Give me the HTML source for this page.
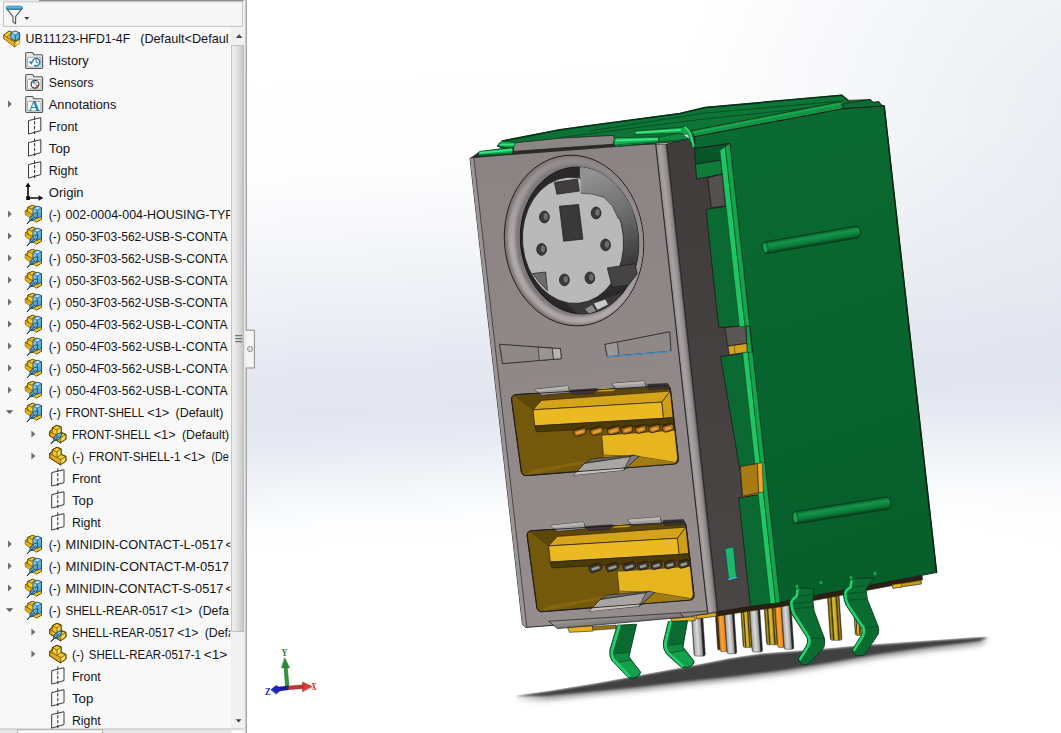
<!DOCTYPE html>
<html lang="en"><head><meta charset="utf-8"><title>UB11123-HFD1-4F</title>
<style>
html,body{margin:0;padding:0;background:#fff;}
body{width:1061px;height:733px;overflow:hidden;}
svg{display:block;}
text{font-family:"Liberation Sans",Arial,sans-serif;font-size:13.4px;fill:#141414;}
</style></head><body>
<svg width="1061" height="733" viewBox="0 0 1061 733">
<defs>

<linearGradient id="bg1" gradientUnits="userSpaceOnUse" x1="640" y1="0" x2="680" y2="733">
<stop offset="0" stop-color="#ffffff"/><stop offset="0.20" stop-color="#fefefe"/><stop offset="0.30" stop-color="#f6f7fa"/><stop offset="0.40" stop-color="#eceff5"/><stop offset="0.48" stop-color="#e5e8f1"/><stop offset="0.54" stop-color="#e2e6ef"/><stop offset="0.59" stop-color="#e8ebf3"/><stop offset="0.64" stop-color="#f3f5f9"/><stop offset="0.69" stop-color="#fcfdfe"/><stop offset="0.73" stop-color="#ffffff"/><stop offset="1" stop-color="#ffffff"/></linearGradient>
<radialGradient id="bg2" gradientUnits="userSpaceOnUse" cx="1110" cy="130" r="430"><stop offset="0" stop-color="#dfe3ec" stop-opacity="0.7"/><stop offset="1" stop-color="#dfe3ec" stop-opacity="0"/></radialGradient>


<clipPath id="treeclip"><rect x="0" y="27" width="230.3" height="702"/></clipPath>
<linearGradient id="thumbg" x1="0" x2="1" y1="0" y2="0"><stop offset="0" stop-color="#f3f3f3"/><stop offset="0.45" stop-color="#e2e2e2"/><stop offset="1" stop-color="#c4c4c4"/></linearGradient>
<linearGradient id="funnelg" x1="0" x2="0" y1="0" y2="1"><stop offset="0" stop-color="#7fd0ea"/><stop offset="1" stop-color="#2a8fb5"/></linearGradient>
<linearGradient id="cubeb" x1="0" x2="1" y1="0" y2="1"><stop offset="0" stop-color="#9fd8f2"/><stop offset="1" stop-color="#3d9ccc"/></linearGradient>
<g id="i-plane"><path d="M0.5,-5.4 L12.8,-8.3 L12.8,4.6 L0.5,8.1 Z" fill="#fbfbfb" stroke="#3a3a3a" stroke-width="1"/><path d="M6.6,-9.6 L6.6,9" stroke="#2a2a2a" stroke-width="1" stroke-dasharray="3.2,1.6" fill="none"/></g>
<g id="i-origin"><path d="M3,-6.5 L3,6 L16,6" fill="none" stroke="#111" stroke-width="1.7"/><path d="M3,-9.6 L5.7,-5 L0.3,-5 Z M18.3,6 L13.6,3.3 L13.6,8.7 Z" fill="#111"/><rect x="1.2" y="4.2" width="3.8" height="3.8" fill="#111"/></g>
<g id="i-folder"><path d="M0.7,7.6 L0.7,-6.4 Q0.7,-7.5 1.8,-7.5 L7,-7.5 Q7.8,-7.5 8.2,-6.6 L8.8,-5.2 L16.6,-5.2 Q17.6,-5.2 17.6,-4.2 L17.6,7.6 Q17.6,8.5 16.6,8.5 L1.7,8.5 Q0.7,8.5 0.7,7.6 Z" fill="#e9e9e9" stroke="#555" stroke-width="1.1"/><rect x="2.5" y="-2.6" width="13.4" height="9.6" rx="0.8" fill="#f6fafc" stroke="#8d8d8d" stroke-width="0.7"/></g>
<g id="i-hist"><use href="#i-folder"/><path d="M7.6,1.2 A3.7,3.7 0 1 1 9,5.2" fill="#fff" stroke="#2b7fae" stroke-width="1.5"/><path d="M11.2,-0.4 L11.2,2.4 L13.4,3" stroke="#1d5e86" stroke-width="0.9" fill="none"/><path d="M3.6,1.4 L8.6,1.2 L6.4,4.8 Z" fill="#2b7fae"/></g>
<g id="i-sens"><use href="#i-folder"/><circle cx="10" cy="2.2" r="3.9" fill="#f4f4f4" stroke="#3c3c3c" stroke-width="1.2"/><path d="M7.4,-0.4 L9.6,1.8 M9.4,-0.8 L9.8,0.6" stroke="#2b7fae" stroke-width="1.1"/><path d="M10,2.2 L13.4,3.4 L11.8,5.6 Z" fill="#d8451f"/><path d="M10,2.2 L12.6,-0.2" stroke="#c8c8c8" stroke-width="1.2"/></g>
<g id="i-anno"><use href="#i-folder"/><text x="9.2" y="6.9" text-anchor="middle" textLength="11" lengthAdjust="spacingAndGlyphs" style="font-family:'Liberation Serif',serif;font-weight:bold;font-size:13.6px;fill:#2a86a8">A</text></g>
<g id="i-asm"><path d="M0.4,-2.8 L6.2,-7.1 L9.3,-5.6 L16.6,-5 L16.6,5.2 L11.7,8.9 L0.4,0.3 Z" fill="#f6ca26" stroke="#5a4508" stroke-width="1" stroke-linejoin="round"/><path d="M0.4,-2.8 L3.8,-0.9 L8.7,2.1 L11.9,4 L11.7,8.9 L0.4,0.3 Z" fill="#e3ac16"/><path d="M11.9,4 L16.6,1.4 L16.6,5.2 L11.7,8.9 Z" fill="#f9dc5c"/><path d="M0.4,-2.8 L3.8,-0.9 L8.7,2.1 L11.9,4 L16.6,1.4 M11.9,4 L11.7,8.9 M3.8,-0.9 L7.8,-3.6" stroke="#6b5208" stroke-width="0.8" fill="none"/><path d="M7.8,-5 L12,-7 L16.6,-5 L16.6,0.8 L12.4,2.9 L7.8,0.6 Z" fill="url(#cubeb)" stroke="#174f78" stroke-width="0.9" stroke-linejoin="round"/><path d="M7.8,-5 L12.4,-3 L16.6,-5 L12,-7 Z" fill="#b7e4f6" stroke="#174f78" stroke-width="0.7" stroke-linejoin="round"/><path d="M12.4,-3 L12.4,2.9" stroke="#174f78" stroke-width="0.8"/></g>
<g id="i-part"><path d="M1.4,-2.5 L4,-4.4 L4,-6.3 L8.5,-8.7 L12.8,-7.1 L12.8,-1.6 L17.6,0.4 L17.6,5.1 L12.1,8.8 L1.4,1.8 Z" fill="#f6ca26" stroke="#5a4508" stroke-width="1" stroke-linejoin="round"/><path d="M1.4,-2.5 L8.8,1.5 L12.6,3.6 L12.1,8.8 L1.4,1.8 Z" fill="#e3ac16"/><path d="M8.8,-3.9 L12.8,-7.1 L12.8,-1.6 L8.8,1.5 Z M12.6,3.6 L17.6,0.4 L17.6,5.1 L12.1,8.8 Z" fill="#f9dc5c"/><path d="M4,-6.3 L8.8,-3.9 L12.8,-7.1 M8.8,-3.9 L8.8,1.5 L12.8,-1.6 M8.8,1.5 L12.6,3.6 L17.6,0.4 M12.6,3.6 L12.1,8.8 M1.4,-2.5 L8.8,1.5 M4,-4.4 L4,-1.2" fill="none" stroke="#6b5208" stroke-width="0.8" stroke-linejoin="round"/><path d="M1.4,-2.5 L4,-4.4 L4,-6.3 L8.5,-8.7 L12.8,-7.1 L12.8,-1.6 L17.6,0.4 L17.6,5.1 L12.1,8.8 L1.4,1.8 Z" fill="none" stroke="#5a4508" stroke-width="1" stroke-linejoin="round"/></g>
<g id="i-feather"><path d="M2.3,9.7 L5,6.4 C4.6,2.6 8.6,-0.8 13,-1.2 C13,3.4 9.6,6.8 5.6,6.6 Z" fill="#86cff0" stroke="#123f5c" stroke-width="1" stroke-linejoin="round"/><path d="M2.2,9.9 L11.4,0.6 M6.2,5.6 L9.6,5 M7.8,4 L11.2,3 M6,5 L6.4,2.4 M7.8,3.4 L8.6,0.8" stroke="#123f5c" stroke-width="0.7" fill="none"/></g>
<g id="i-partf"><use href="#i-part"/><use href="#i-feather" x="0.4" y="0"/></g>
<g id="i-comp"><path d="M0.6,-3.4 L3,-4.8 L3,-6.7 L7.8,-8.7 L12.1,-7.2 L16.8,-6 L16.8,5.2 L11.6,8.2 L0.6,0.4 Z" fill="#f6ca26" stroke="#5a4508" stroke-width="1" stroke-linejoin="round"/><path d="M0.6,-3.4 L8,0.6 L11.8,3 L11.6,8.2 L0.6,0.4 Z" fill="#e3ac16"/><path d="M3,-6.7 L7.6,-4.6 M0.6,-3.4 L8,0.6 M3,-4.8 L3,-2" stroke="#6b5208" stroke-width="0.8" fill="none"/><path d="M8.25,-5.8 L13,-7.7 L16.8,-6.1 L16.8,2.3 L12.5,4.4 L8.25,2.2 Z" fill="url(#cubeb)" stroke="#174f78" stroke-width="0.9" stroke-linejoin="round"/><path d="M8.25,-5.8 L12.5,-3.9 L16.8,-6.1 L13,-7.7 Z" fill="#b7e4f6" stroke="#174f78" stroke-width="0.7" stroke-linejoin="round"/><path d="M12.5,-3.9 L12.5,4.4" stroke="#174f78" stroke-width="0.8"/><use href="#i-feather" x="0.2" y="0"/></g>
<path id="i-arr-r" d="M0,-3.5 L3.9,0 L0,3.5 Z" fill="#6e6e6e"/>
<path id="i-arr-d" d="M0,-1.8 L7.4,-1.8 L3.7,2 Z" fill="#5e5e5e"/>


<linearGradient id="gFront" gradientUnits="userSpaceOnUse" x1="560" y1="150" x2="620" y2="620"><stop offset="0" stop-color="#8c8484"/><stop offset="0.55" stop-color="#918989"/><stop offset="1" stop-color="#968e8e"/></linearGradient>
<linearGradient id="gBend" gradientUnits="userSpaceOnUse" x1="680" y1="380" x2="692" y2="378.7"><stop offset="0" stop-color="#8d8686"/><stop offset="0.45" stop-color="#a8a2a2"/><stop offset="0.8" stop-color="#8f8989"/><stop offset="1" stop-color="#5a5555"/></linearGradient>
<linearGradient id="gSide" gradientUnits="userSpaceOnUse" x1="690" y1="140" x2="730" y2="610"><stop offset="0" stop-color="#413c3c"/><stop offset="1" stop-color="#4b4646"/></linearGradient>
<linearGradient id="gGreen" gradientUnits="userSpaceOnUse" x1="740" y1="120" x2="900" y2="600"><stop offset="0" stop-color="#0a6a31"/><stop offset="0.5" stop-color="#08642e"/><stop offset="1" stop-color="#075e2b"/></linearGradient>
<linearGradient id="gTop" gradientUnits="userSpaceOnUse" x1="600" y1="110" x2="615" y2="150"><stop offset="0" stop-color="#0c7035"/><stop offset="1" stop-color="#0d7637"/></linearGradient>
<linearGradient id="gRing" gradientUnits="userSpaceOnUse" x1="520" y1="180" x2="640" y2="310"><stop offset="0" stop-color="#6a6464"/><stop offset="0.35" stop-color="#8c8585"/><stop offset="0.7" stop-color="#aaa3a3"/><stop offset="1" stop-color="#8a8383"/></linearGradient>
<linearGradient id="gBarrel" gradientUnits="userSpaceOnUse" x1="596" y1="172" x2="634" y2="286"><stop offset="0" stop-color="#929292"/><stop offset="0.4" stop-color="#6c6c6c"/><stop offset="0.78" stop-color="#3e3e3e"/><stop offset="1" stop-color="#2a2a2a"/></linearGradient>
<linearGradient id="gRod" gradientUnits="userSpaceOnUse" x1="0" y1="-6" x2="0" y2="6"><stop offset="0" stop-color="#0a5a29"/><stop offset="0.3" stop-color="#14964a"/><stop offset="0.7" stop-color="#0c7a39"/><stop offset="1" stop-color="#053d1b"/></linearGradient>
<linearGradient id="gPinG" x1="0" x2="1" y1="0" y2="0"><stop offset="0" stop-color="#5a5a5a"/><stop offset="0.14" stop-color="#b5b5b5"/><stop offset="0.42" stop-color="#dadada"/><stop offset="0.74" stop-color="#9a9a9a"/><stop offset="0.84" stop-color="#262626"/><stop offset="1" stop-color="#1c1c1c"/></linearGradient>
<linearGradient id="gPinD" x1="0" x2="1" y1="0" y2="0"><stop offset="0" stop-color="#3a2a08"/><stop offset="1" stop-color="#5a3a08"/></linearGradient>
<linearGradient id="gPinYs" x1="0" x2="1" y1="0" y2="0"><stop offset="0" stop-color="#3a2e06"/><stop offset="0.16" stop-color="#b89a20"/><stop offset="0.3" stop-color="#3a2e06"/><stop offset="0.42" stop-color="#d8bc34"/><stop offset="0.62" stop-color="#c8a828"/><stop offset="0.74" stop-color="#3a2e06"/><stop offset="0.86" stop-color="#a88a1c"/><stop offset="1" stop-color="#2a2206"/></linearGradient>
<linearGradient id="gPinY" x1="0" x2="1" y1="0" y2="0"><stop offset="0" stop-color="#7a6410"/><stop offset="0.4" stop-color="#e2c23a"/><stop offset="1" stop-color="#7a6410"/></linearGradient>
<linearGradient id="gPinO" x1="0" x2="1" y1="0" y2="0"><stop offset="0" stop-color="#c8741a"/><stop offset="0.35" stop-color="#ffa233"/><stop offset="0.8" stop-color="#e88a20"/><stop offset="1" stop-color="#6a3a08"/></linearGradient>
<linearGradient id="gShadow" gradientUnits="userSpaceOnUse" x1="740" y1="655" x2="748" y2="692"><stop offset="0" stop-color="#2e2e2e" stop-opacity="0.95"/><stop offset="0.45" stop-color="#555" stop-opacity="0.7"/><stop offset="1" stop-color="#bbb" stop-opacity="0"/></linearGradient>
<linearGradient id="gShadowH" gradientUnits="userSpaceOnUse" x1="520" y1="0" x2="985" y2="0"><stop offset="0" stop-color="#fff" stop-opacity="1"/><stop offset="0.22" stop-color="#fff" stop-opacity="0"/><stop offset="0.75" stop-color="#fff" stop-opacity="0"/><stop offset="1" stop-color="#fff" stop-opacity="1"/></linearGradient>
<filter id="blur1s" x="-5%" y="-30%" width="110%" height="160%"><feGaussianBlur stdDeviation="1.1"/></filter>
<filter id="blur2" x="-5%" y="-40%" width="110%" height="180%"><feGaussianBlur stdDeviation="3"/></filter>
<linearGradient id="gLeg" x1="0" x2="1" y1="0" y2="0"><stop offset="0" stop-color="#19b85c"/><stop offset="0.25" stop-color="#0f8a40"/><stop offset="1" stop-color="#0a6e33"/></linearGradient>
<clipPath id="cpRing"><ellipse cx="574" cy="240.5" rx="69" ry="85" transform="rotate(-6 574 240.5)"/></clipPath>
<linearGradient id="gRingHL" gradientUnits="userSpaceOnUse" x1="640" y1="170" x2="520" y2="310"><stop offset="0" stop-color="#8a8383"/><stop offset="0.4" stop-color="#9a9393"/><stop offset="0.75" stop-color="#b1aaaa"/><stop offset="1" stop-color="#a9a2a2"/></linearGradient>
<linearGradient id="gLip" gradientUnits="userSpaceOnUse" x1="615" y1="616" x2="616" y2="626"><stop offset="0" stop-color="#9a9595"/><stop offset="0.5" stop-color="#868181"/><stop offset="1" stop-color="#5e5a5a"/></linearGradient>
<filter id="blur1" x="-10%" y="-10%" width="120%" height="120%"><feGaussianBlur stdDeviation="1.3"/></filter>
<clipPath id="cpHole"><ellipse cx="579.5" cy="240.5" rx="59" ry="73.5" transform="rotate(-6 579.5 240.5)"/></clipPath>

</defs>
<rect x="247" y="0" width="814" height="733" fill="url(#bg1)"/>
<rect x="247" y="0" width="814" height="733" fill="url(#bg2)"/>
<clipPath id="cpShadow"><polygon points="514.7,695.5 549.0,690.8 598.0,682.7 637.3,675.4 671.6,669.2 700.0,664.0 730.0,658.0 760.0,653.5 790.0,651.2 836.0,647.5 860.0,645.1 897.0,642.6 946.0,639.2 975.0,637.1 988.0,636.4 1061.0,632.0 1061.0,733.0 500.0,733.0 500.0,700.0"/></clipPath>
<g clip-path="url(#cpShadow)"><polygon points="514.7,697.9 549.0,693.2 598.0,685.1 637.3,677.8 671.6,671.6 700.0,666.4 730.0,660.4 760.0,655.9 790.0,653.6 836.0,649.9 860.0,647.5 897.0,645.0 946.0,641.6 975.0,639.5 988.0,638.8 980.0,643.9 971.0,645.1 924.0,650.5 877.0,656.9 829.9,665.1 782.7,672.9 735.6,678.9 688.5,683.9 641.0,689.5 594.0,694.1 547.0,698.9" fill="#4a4a4a" opacity="0.75" filter="url(#blur2)"/><polygon points="514.7,696.3 549.0,691.6 598.0,683.5 637.3,676.2 671.6,670.0 700.0,664.8 730.0,658.8 760.0,654.3 790.0,652.0 836.0,648.3 860.0,645.9 897.0,643.4 946.0,640.0 975.0,637.9 988.0,637.2 980.0,641.0 971.0,642.2 924.0,647.6 877.0,654.0 829.9,662.2 782.7,670.0 735.6,676.0 688.5,681.0 641.0,686.6 594.0,691.2 547.0,696.0" fill="#404040" filter="url(#blur1s)"/></g>
<g transform="translate(691.3,614) skewX(3.8)"><rect x="0" y="0" width="11.3" height="42.1" rx="2.0" fill="url(#gPinG)" stroke="#2a2a2a" stroke-width="0.5"/></g>
<g transform="translate(715.2,612) skewX(3.8)"><rect x="0" y="0" width="2.8" height="38.0" rx="1.4" fill="url(#gPinD)" stroke="#2a2a2a" stroke-width="0.5"/></g>
<g transform="translate(717.5,612) skewX(3.8)"><rect x="0" y="0" width="7.2" height="39.6" rx="2.0" fill="url(#gPinO)" stroke="#2a2a2a" stroke-width="0.5"/></g>
<g transform="translate(724.1,610) skewX(3.8)"><rect x="0" y="0" width="9.8" height="43.8" rx="2.0" fill="url(#gPinG)" stroke="#2a2a2a" stroke-width="0.5"/></g>
<g transform="translate(740.5,606) skewX(3.8)"><rect x="0" y="0" width="9.1" height="41.6" rx="2.0" fill="url(#gPinYs)" stroke="#2a2a2a" stroke-width="0.5"/></g>
<g transform="translate(749,604) skewX(3.8)"><rect x="0" y="0" width="10.4" height="48.1" rx="2.0" fill="url(#gPinG)" stroke="#2a2a2a" stroke-width="0.5"/></g>
<g transform="translate(763.7,601) skewX(3.8)"><rect x="0" y="0" width="11.3" height="43.8" rx="2.0" fill="url(#gPinYs)" stroke="#2a2a2a" stroke-width="0.5"/></g>
<g transform="translate(774.5,600) skewX(3.8)"><rect x="0" y="0" width="6.7" height="47.6" rx="2.0" fill="url(#gPinO)" stroke="#2a2a2a" stroke-width="0.5"/></g>
<g transform="translate(780.7,598) skewX(3.8)"><rect x="0" y="0" width="9.8" height="51.3" rx="2.0" fill="url(#gPinG)" stroke="#2a2a2a" stroke-width="0.5"/></g>
<g transform="translate(827,590) skewX(3.8)"><rect x="0" y="0" width="11.7" height="50.3" rx="2.0" fill="url(#gPinYs)" stroke="#2a2a2a" stroke-width="0.5"/></g>
<g transform="translate(853,600) skewX(3.8)"><rect x="0" y="0" width="6.0" height="35.5" rx="2.0" fill="url(#gPinYs)" stroke="#2a2a2a" stroke-width="0.5"/></g>
<polygon points="567.4,627.2 592.4,625.8 592.9,631.1 569.4,632.3" fill="#e4b21d" stroke="#1d1a1a" stroke-width="0.6" stroke-linejoin="round"/>
<polygon points="592.9,626.4 616.0,625.0 616.0,628.6 593.2,630.2" fill="#94720f" stroke="#1d1a1a" stroke-width="0.5" stroke-linejoin="round"/>
<polygon points="671.0,618.4 694.8,616.6 695.2,620.6 671.4,622.6" fill="#e4b21d" stroke="#1d1a1a" stroke-width="0.6" stroke-linejoin="round"/>
<polygon points="696.0,615.4 716.0,612.4 716.4,616.2 696.4,619.0" fill="#d9a81c" stroke="#1d1a1a" stroke-width="0.6" stroke-linejoin="round"/>
<polygon points="497.0,146.0 499.0,144.3 502.3,141.0 560.0,129.7 585.0,126.2 680.0,113.4 705.0,107.5 841.7,95.2 848.0,100.4 870.2,99.6 873.0,102.3 879.1,101.8 881.1,105.0 884.2,106.0 843.8,108.7 694.5,136.7 690.0,141.0 614.8,146.0 513.7,152.0" fill="url(#gTop)" stroke="#1d1a1a" stroke-width="0.8" stroke-linejoin="round"/>
<path d="M590,131 L705,113 L843,101 M560,137.5 L700,119.5 L842.5,104.5 M705,107.5 L760,103.5" fill="none" stroke="#053d1b" stroke-width="0.7" stroke-linejoin="round" stroke-linecap="round"/>
<path d="M502.3,141 L560,129.7 L585,126.2 L680,113.4 L705,107.5 L841.7,95.2 L848,100.4" fill="none" stroke="#04331a" stroke-width="1.5" stroke-linejoin="round" stroke-linecap="round"/>
<polygon points="692.0,130.6 839.7,101.8 843.8,108.7 694.5,136.9" fill="#119544" stroke="#1d1a1a" stroke-width="0.7" stroke-linejoin="round"/>
<path d="M693,132.6 L840.6,103.8" fill="none" stroke="#18aa50" stroke-width="1.6" stroke-linejoin="round" stroke-linecap="round"/>
<polygon points="843.8,103.5 870.2,99.6 873.0,102.3 879.1,101.8 881.1,105.0 884.2,106.0 843.8,108.7" fill="#0a6d32" stroke="#1d1a1a" stroke-width="0.7" stroke-linejoin="round"/>
<polygon points="666.5,144.0 691.5,138.5 730.0,140.0 781.0,602.5 755.0,606.0 717.6,611.6" fill="url(#gSide)" stroke="#1d1a1a" stroke-width="0.8" stroke-linejoin="round"/>
<polygon points="717.6,611.6 779.5,602.0 922.0,575.2 922.6,579.8 782.0,606.6 750.0,611.0 718.0,616.0" fill="#2c2010" stroke="#1d1a1a" stroke-width="0.6" stroke-linejoin="round"/>
<polygon points="892.3,584.8 921.0,580.3 921.4,584.0 893.0,588.2" fill="#c8981a" stroke="#1d1a1a" stroke-width="0.6" stroke-linejoin="round"/>
<polygon points="892.3,584.8 901.0,583.4 901.6,587.0 893.0,588.2" fill="#e6b41e" stroke="#1d1a1a" stroke-width="0.4" stroke-linejoin="round"/>
<polygon points="694.5,136.7 843.8,108.7 884.2,106.0 936.6,572.5 780.0,602.3 729.8,143.4 694.8,148.4" fill="url(#gGreen)" stroke="#1d1a1a" stroke-width="0.9" stroke-linejoin="round"/>
<path d="M884.2,106 L936.6,572.5" fill="none" stroke="#04240f" stroke-width="1.5" stroke-linejoin="round" stroke-linecap="round"/>
<polygon points="694.7,148.6 726.0,144.2 720.9,160.2 695.4,164.3" fill="#07562a" stroke="#1d1a1a" stroke-width="0.8" stroke-linejoin="round"/>
<polygon points="695.4,164.3 720.8,160.2 722.2,174.1 696.7,179.0" fill="#0e7d3a" stroke="#1d1a1a" stroke-width="0.8" stroke-linejoin="round"/>
<polygon points="707.7,177.8 722.2,174.1 725.4,206.0 711.4,207.6" fill="#55504f" stroke="#1d1a1a" stroke-width="0.8" stroke-linejoin="round"/>
<polygon points="706.0,209.6 727.6,206.0 740.6,326.0 718.7,327.6" fill="#0b6a32" stroke="#1d1a1a" stroke-width="0.8" stroke-linejoin="round"/>
<polygon points="724.9,327.6 745.6,325.6 746.8,343.4 727.9,346.2" fill="#5a5554" stroke="#1d1a1a" stroke-width="0.7" stroke-linejoin="round"/>
<polygon points="727.9,346.2 746.8,343.4 747.4,352.2 729.4,354.9" fill="#d2a41b" stroke="#1d1a1a" stroke-width="0.7" stroke-linejoin="round"/>
<path d="M734.4,345.2 L735,354" fill="none" stroke="#5a4508" stroke-width="0.6" stroke-linejoin="round" stroke-linecap="round"/>
<polygon points="720.6,356.6 744.4,353.0 756.8,466.0 739.6,468.4" fill="#0b6a32" stroke="#1d1a1a" stroke-width="0.8" stroke-linejoin="round"/>
<polygon points="739.9,468.2 756.6,464.6 759.8,494.2 742.4,497.4" fill="#b98a14" stroke="#1d1a1a" stroke-width="0.7" stroke-linejoin="round"/>
<polygon points="753.4,465.4 756.6,464.6 759.8,494.2 756.6,494.8" fill="#f0b92a"/>
<polygon points="738.7,498.0 760.4,494.4 770.8,603.6 750.4,606.6" fill="#0b6a32" stroke="#1d1a1a" stroke-width="0.8" stroke-linejoin="round"/>
<polygon points="719.8,150.4 725.3,146.7 745.1,326.2 739.4,327.0" fill="#20c664" stroke="#06451e" stroke-width="0.6" stroke-linejoin="round"/>
<polygon points="725.3,146.7 729.8,143.6 749.7,325.5 745.1,326.2" fill="#14a44d" stroke="#06451e" stroke-width="0.6" stroke-linejoin="round"/>
<polygon points="742.6,352.6 748.1,351.9 775.6,603.0 770.2,603.8" fill="#20c664" stroke="#06451e" stroke-width="0.6" stroke-linejoin="round"/>
<polygon points="748.1,351.9 752.6,351.4 780.0,602.3 775.6,603.0" fill="#14a44d" stroke="#06451e" stroke-width="0.6" stroke-linejoin="round"/>
<polygon points="746.6,326.6 749.2,326.2 752.0,352.0 747.4,352.6" fill="#14a44d" stroke="#06451e" stroke-width="0.5" stroke-linejoin="round"/>
<polygon points="740.3,466.6 757.5,463.5 758.7,492.8 742.6,496.2" fill="#a87c12" stroke="#1d1a1a" stroke-width="0.7" stroke-linejoin="round"/>
<polygon points="757.5,463.5 762.2,462.8 763.4,492.0 758.7,492.8" fill="#f0a82a" stroke="#1d1a1a" stroke-width="0.5" stroke-linejoin="round"/>
<polygon points="725.0,548.6 733.7,546.9 736.4,577.4 728.7,579.4" fill="#1fb868" stroke="#0a4a5a" stroke-width="0.8" stroke-linejoin="round"/>
<path d="M728.7,579.4 L736.4,577.4" fill="none" stroke="#38c8e0" stroke-width="1.2" stroke-linejoin="round" stroke-linecap="round"/>
<g transform="translate(764.6,247.9) rotate(-9.78)"><rect x="-2" y="-5.9" width="99.4" height="11.8" rx="4.4" fill="url(#gRod)" stroke="#04351a" stroke-width="0.8"/><ellipse cx="0.6" cy="0" rx="2.6" ry="5.1" fill="#18a04e" stroke="#04351a" stroke-width="0.6"/></g>
<g transform="translate(794.8,517.8) rotate(-9.09)"><rect x="-2" y="-6.2" width="99.0" height="12.4" rx="4.7" fill="url(#gRod)" stroke="#04351a" stroke-width="0.8"/><ellipse cx="0.6" cy="0" rx="2.6" ry="5.4" fill="#18a04e" stroke="#04351a" stroke-width="0.6"/></g>
<polygon points="655.6,144.4 666.5,144.0 717.6,611.6 707.6,613.6" fill="url(#gBend)" stroke="#1d1a1a" stroke-width="0.7" stroke-linejoin="round"/>
<polygon points="470.0,158.2 513.6,151.4 560.0,148.0 613.2,144.2 655.6,143.9 707.6,613.6 526.0,627.4 522.4,624.6" fill="url(#gFront)" stroke="#1d1a1a" stroke-width="0.9" stroke-linejoin="round"/>
<polygon points="470.0,158.2 473.8,157.8 526.8,627.2 526.0,627.4 522.4,624.6" fill="#9a9494"/>
<path d="M473.8,157.8 L526.8,627" fill="none" stroke="#2a2626" stroke-width="0.7" stroke-linejoin="round" stroke-linecap="round"/>
<polygon points="478.0,152.5 513.7,146.0 614.8,139.0 655.6,143.9 470.0,158.2" fill="#2e2a2a"/>
<polygon points="513.7,143.0 560.0,138.2 613.2,135.4 614.8,140.0 613.2,144.2 560.0,148.0 513.6,151.4" fill="#8d8686" stroke="#1d1a1a" stroke-width="0.7" stroke-linejoin="round"/>
<g>
<ellipse cx="574" cy="240.5" rx="69.5" ry="85.5" transform="rotate(-6 574 240.5)" fill="#7f7878" stroke="#1d1a1a" stroke-width="0.9"/>
<g clip-path="url(#cpRing)"><ellipse cx="576.4" cy="240.5" rx="64.6" ry="80" transform="rotate(-6 576.4 240.5)" fill="none" stroke="url(#gRingHL)" stroke-width="7" filter="url(#blur1)"/></g>
<ellipse cx="579.5" cy="240.5" rx="59" ry="73.5" transform="rotate(-6 579.5 240.5)" fill="#2a2828" stroke="#141212" stroke-width="0.9"/>
<g clip-path="url(#cpHole)">
<polygon points="579.6,160.0 655.0,160.0 655.0,272.0 632.0,292.0 600.0,292.0 579.6,215.0" fill="url(#gBarrel)"/>
<path d="M579.6,166 L580.6,192" fill="none" stroke="#222" stroke-width="0.8" stroke-linejoin="round" stroke-linecap="round"/>
<polygon points="560.0,298.0 600.0,300.0 625.0,292.0 618.0,310.0 580.0,316.0" fill="#3a3838"/>
<polygon points="593.7,303.6 605.4,299.6 608.0,304.5 597.6,309.7" fill="#c9c9c9"/>
<polygon points="585.0,309.0 592.0,305.0 596.0,311.0 589.0,313.6" fill="#8a8a8a"/>
<ellipse cx="573" cy="240.3" rx="50.5" ry="63.3" transform="rotate(-5 573 240.3)" fill="#b9b9b9" stroke="#1d1a1a" stroke-width="0.8"/>
<polygon points="579.6,160.0 640.0,160.0 640.0,214.0 618.5,219.0 612.0,205.5 604.1,197.4 592.0,194.0 580.9,193.2" fill="url(#gBarrel)"/>
<path d="M580.9,193.2 L592,194 L604.1,197.4 L612,205.5 L618.5,219" fill="none" stroke="#2a2a2a" stroke-width="0.6" stroke-linejoin="round" stroke-linecap="round"/>
</g>
<polygon points="554.4,182.4 577.4,179.0 579.4,191.1 556.9,194.2" fill="#3f3d3d" stroke="#1d1a1a" stroke-width="0.7" stroke-linejoin="round"/>
<polygon points="559.4,206.2 578.6,204.5 582.9,239.2 563.6,241.2" fill="#3a3838" stroke="#1d1a1a" stroke-width="0.7" stroke-linejoin="round"/>
<polygon points="607.3,267.9 634.8,263.7 637.3,273.7 628.6,284.9 612.3,287.4" fill="#454343" stroke="#1d1a1a" stroke-width="0.7" stroke-linejoin="round"/>
<polygon points="532.6,273.6 545.6,272.0 547.4,290.6 541.0,284.0" fill="#6e6c6c" stroke="#1d1a1a" stroke-width="0.7" stroke-linejoin="round"/>
<ellipse cx="544.4" cy="217" rx="4.9" ry="5.9" fill="#3b3939" stroke="#1a1818" stroke-width="0.7"/>
<ellipse cx="545.8" cy="216.4" rx="2.2" ry="3.4" fill="#6f6d6d"/>
<ellipse cx="596.1" cy="213" rx="4.9" ry="5.9" fill="#3b3939" stroke="#1a1818" stroke-width="0.7"/>
<ellipse cx="597.5" cy="212.4" rx="2.2" ry="3.4" fill="#6f6d6d"/>
<ellipse cx="541.6" cy="249.4" rx="4.9" ry="5.9" fill="#3b3939" stroke="#1a1818" stroke-width="0.7"/>
<ellipse cx="543.0" cy="248.8" rx="2.2" ry="3.4" fill="#6f6d6d"/>
<ellipse cx="605.6" cy="244.9" rx="4.9" ry="5.9" fill="#3b3939" stroke="#1a1818" stroke-width="0.7"/>
<ellipse cx="607.0" cy="244.3" rx="2.2" ry="3.4" fill="#6f6d6d"/>
<ellipse cx="564.4" cy="279.9" rx="4.9" ry="5.9" fill="#3b3939" stroke="#1a1818" stroke-width="0.7"/>
<ellipse cx="565.8" cy="279.29999999999995" rx="2.2" ry="3.4" fill="#6f6d6d"/>
<ellipse cx="589.9" cy="277.9" rx="4.9" ry="5.9" fill="#3b3939" stroke="#1a1818" stroke-width="0.7"/>
<ellipse cx="591.3" cy="277.29999999999995" rx="2.2" ry="3.4" fill="#6f6d6d"/>
</g>
<polygon points="499.5,344.2 560.4,348.7 561.2,358.7 502.5,363.7" fill="#8f8888" stroke="#1d1a1a" stroke-width="0.8" stroke-linejoin="round"/>
<polygon points="538.0,347.2 552.4,348.2 553.6,359.2 539.4,360.4" fill="#9a9494" stroke="#1d1a1a" stroke-width="0.6" stroke-linejoin="round"/>
<polygon points="552.4,348.2 560.4,348.7 561.2,358.7 553.6,359.2" fill="#b9b4b4" stroke="#1d1a1a" stroke-width="0.6" stroke-linejoin="round"/>
<polygon points="604.9,344.5 669.8,331.7 671.0,351.2 607.4,356.7" fill="#8f8888" stroke="#1d1a1a" stroke-width="0.8" stroke-linejoin="round"/>
<polygon points="604.9,344.5 617.2,342.0 619.0,355.6 607.4,356.7" fill="#9d9797" stroke="#1d1a1a" stroke-width="0.6" stroke-linejoin="round"/>
<path d="M607.4,356.9 L671,351.4" fill="none" stroke="#3f8fd0" stroke-width="1.1" stroke-linejoin="round" stroke-linecap="round"/>
<g transform="translate(0,0)">
<path d="M516,394.6 L665,385.7 Q670,385.4 670.6,390.4 L678.4,458.6 Q679,463.6 674,464 L527,475.6 Q521.8,476 521.2,471 L511.6,400 Q511,395 516,394.6 Z" fill="#74580c" stroke="#1d1a1a" stroke-width="0.9" stroke-linejoin="round" stroke-linecap="round"/>
<polygon points="513.0,395.4 669.0,386.4 670.4,391.1 541.5,400.4 533.0,409.8" fill="#5f4709"/>
<polygon points="526.0,475.5 602.4,459.9 602.4,457.6 532.0,470.0" fill="#856610"/>
<polygon points="541.5,400.4 670.4,391.1 661.9,402.1 533.0,409.8" fill="#d6a41b" stroke="#1d1a1a" stroke-width="0.6" stroke-linejoin="round"/>
<polygon points="533.0,409.8 661.9,402.1 663.6,418.3 534.7,425.9" fill="#ebb921" stroke="#1d1a1a" stroke-width="0.7" stroke-linejoin="round"/>
<polygon points="661.9,402.1 670.4,391.1 673.0,417.4 663.6,418.3" fill="#cf9e1b" stroke="#1d1a1a" stroke-width="0.6" stroke-linejoin="round"/>
<polygon points="534.7,425.9 663.6,418.3 673.0,417.4 674.7,424.2 600.0,428.6 536.4,431.8" fill="#4d3a09" stroke="#1d1a1a" stroke-width="0.6" stroke-linejoin="round"/>
<polygon points="601.7,435.2 674.7,430.1 677.6,458.1 676.0,462.6 639.0,456.6 603.4,455.0" fill="#e6b41e" stroke="#1d1a1a" stroke-width="0.6" stroke-linejoin="round"/>
<polygon points="603.4,455.0 639.0,456.6 676.0,462.6 674.0,464.0 606.0,469.4" fill="#a07c12"/>
<g transform="translate(579.7,431.4) rotate(-16)"><rect x="-6.4" y="-3.4" width="12.8" height="7.4" rx="3.4" fill="#b06f14" stroke="#241804" stroke-width="0.8"/><rect x="-4.2" y="-0.4" width="8.4" height="2.6" rx="1.3" fill="#e0a040"/><path d="M-5.4,-2.4 L5.4,-2.4" stroke="#3a2806" stroke-width="1.2"/></g>
<g transform="translate(596.6,430.6) rotate(-16)"><rect x="-6.4" y="-3.4" width="12.8" height="7.4" rx="3.4" fill="#b06f14" stroke="#241804" stroke-width="0.8"/><rect x="-4.2" y="-0.4" width="8.4" height="2.6" rx="1.3" fill="#e0a040"/><path d="M-5.4,-2.4 L5.4,-2.4" stroke="#3a2806" stroke-width="1.2"/></g>
<g transform="translate(613.6,429.9) rotate(-16)"><rect x="-6.4" y="-3.4" width="12.8" height="7.4" rx="3.4" fill="#b06f14" stroke="#241804" stroke-width="0.8"/><rect x="-4.2" y="-0.4" width="8.4" height="2.6" rx="1.3" fill="#e0a040"/><path d="M-5.4,-2.4 L5.4,-2.4" stroke="#3a2806" stroke-width="1.2"/></g>
<g transform="translate(627.2,429.3) rotate(-16)"><rect x="-5.6" y="-3.4" width="11.2" height="7.4" rx="3.4" fill="#b06f14" stroke="#241804" stroke-width="0.8"/><rect x="-3.3999999999999995" y="-0.4" width="6.799999999999999" height="2.6" rx="1.3" fill="#e0a040"/><path d="M-4.6,-2.4 L4.6,-2.4" stroke="#3a2806" stroke-width="1.2"/></g>
<g transform="translate(640.7,428.7) rotate(-16)"><rect x="-5.6" y="-3.4" width="11.2" height="7.4" rx="3.4" fill="#b06f14" stroke="#241804" stroke-width="0.8"/><rect x="-3.3999999999999995" y="-0.4" width="6.799999999999999" height="2.6" rx="1.3" fill="#e0a040"/><path d="M-4.6,-2.4 L4.6,-2.4" stroke="#3a2806" stroke-width="1.2"/></g>
<g transform="translate(654.3,428.0) rotate(-16)"><rect x="-5.6" y="-3.4" width="11.2" height="7.4" rx="3.4" fill="#b06f14" stroke="#241804" stroke-width="0.8"/><rect x="-3.3999999999999995" y="-0.4" width="6.799999999999999" height="2.6" rx="1.3" fill="#e0a040"/><path d="M-4.6,-2.4 L4.6,-2.4" stroke="#3a2806" stroke-width="1.2"/></g>
<g transform="translate(667.9,427.4) rotate(-16)"><rect x="-5.6" y="-3.4" width="11.2" height="7.4" rx="3.4" fill="#b06f14" stroke="#241804" stroke-width="0.8"/><rect x="-3.3999999999999995" y="-0.4" width="6.799999999999999" height="2.6" rx="1.3" fill="#e0a040"/><path d="M-4.6,-2.4 L4.6,-2.4" stroke="#3a2806" stroke-width="1.2"/></g>
<polygon points="534.7,389.4 567.8,386.0 570.3,392.8 541.5,395.4" fill="#a5a0a0" stroke="#1d1a1a" stroke-width="0.7" stroke-linejoin="round"/>
<polygon points="534.7,389.4 567.8,386.0 568.6,388.4 537.0,391.6" fill="#bcb7b7"/>
<polygon points="570.3,390.3 596.6,388.6 593.2,393.7 572.9,394.5" fill="#3d3434" stroke="#1d1a1a" stroke-width="0.5" stroke-linejoin="round"/>
<polygon points="611.9,383.5 644.1,380.9 646.7,387.7 616.1,389.4" fill="#a5a0a0" stroke="#1d1a1a" stroke-width="0.7" stroke-linejoin="round"/>
<polygon points="611.9,383.5 644.1,380.9 644.9,383.3 614.0,385.8" fill="#bcb7b7"/>
<polygon points="647.5,384.3 667.9,383.5 670.4,388.6 649.2,389.4" fill="#3d3434" stroke="#1d1a1a" stroke-width="0.5" stroke-linejoin="round"/>
<polygon points="596.6,391.6 603.0,387.6 616.1,389.4 612.0,391.0" fill="#d6a81c"/>
<polygon points="573.7,475.1 584.7,463.2 630.5,456.4 639.0,456.4 623.8,470.0" fill="#aaa5a5" stroke="#1d1a1a" stroke-width="0.7" stroke-linejoin="round"/>
<polygon points="584.7,463.2 592.0,458.8 634.0,455.2 630.5,456.4" fill="#6f6a6a" stroke="#1d1a1a" stroke-width="0.6" stroke-linejoin="round"/>
<polygon points="623.8,470.0 630.5,456.4 634.0,455.2 639.0,456.4" fill="#7d7878" stroke="#1d1a1a" stroke-width="0.6" stroke-linejoin="round"/>
<polygon points="573.7,475.1 578.0,471.4 622.0,467.0 623.8,470.0" fill="#c9c5c5"/>
<path d="M516,394.6 L665,385.7 Q670,385.4 670.6,390.4 L678.4,458.6 Q679,463.6 674,464 L527,475.6 Q521.8,476 521.2,471 L511.6,400 Q511,395 516,394.6 Z" fill="none" stroke="#1d1a1a" stroke-width="0.9" stroke-linejoin="round" stroke-linecap="round"/>
</g>
<g transform="translate(15.6,136.1)">
<path d="M516,394.6 L665,385.7 Q670,385.4 670.6,390.4 L678.4,458.6 Q679,463.6 674,464 L527,475.6 Q521.8,476 521.2,471 L511.6,400 Q511,395 516,394.6 Z" fill="#74580c" stroke="#1d1a1a" stroke-width="0.9" stroke-linejoin="round" stroke-linecap="round"/>
<polygon points="513.0,395.4 669.0,386.4 670.4,391.1 541.5,400.4 533.0,409.8" fill="#5f4709"/>
<polygon points="526.0,475.5 602.4,459.9 602.4,457.6 532.0,470.0" fill="#856610"/>
<polygon points="541.5,400.4 670.4,391.1 661.9,402.1 533.0,409.8" fill="#d6a41b" stroke="#1d1a1a" stroke-width="0.6" stroke-linejoin="round"/>
<polygon points="533.0,409.8 661.9,402.1 663.6,418.3 534.7,425.9" fill="#ebb921" stroke="#1d1a1a" stroke-width="0.7" stroke-linejoin="round"/>
<polygon points="661.9,402.1 670.4,391.1 673.0,417.4 663.6,418.3" fill="#cf9e1b" stroke="#1d1a1a" stroke-width="0.6" stroke-linejoin="round"/>
<polygon points="534.7,425.9 663.6,418.3 673.0,417.4 674.7,424.2 600.0,428.6 536.4,431.8" fill="#4d3a09" stroke="#1d1a1a" stroke-width="0.6" stroke-linejoin="round"/>
<polygon points="601.7,435.2 674.7,430.1 677.6,458.1 676.0,462.6 639.0,456.6 603.4,455.0" fill="#e6b41e" stroke="#1d1a1a" stroke-width="0.6" stroke-linejoin="round"/>
<polygon points="603.4,455.0 639.0,456.6 676.0,462.6 674.0,464.0 606.0,469.4" fill="#a07c12"/>
<g transform="translate(579.7,431.4) rotate(-16)"><rect x="-6.4" y="-3.4" width="12.8" height="7.4" rx="3.4" fill="#3c3c3c" stroke="#241804" stroke-width="0.8"/><rect x="-4.2" y="-0.4" width="8.4" height="2.6" rx="1.3" fill="#9a9a9a"/><path d="M-5.4,-2.4 L5.4,-2.4" stroke="#3a2806" stroke-width="1.2"/></g>
<g transform="translate(596.6,430.6) rotate(-16)"><rect x="-6.4" y="-3.4" width="12.8" height="7.4" rx="3.4" fill="#3c3c3c" stroke="#241804" stroke-width="0.8"/><rect x="-4.2" y="-0.4" width="8.4" height="2.6" rx="1.3" fill="#9a9a9a"/><path d="M-5.4,-2.4 L5.4,-2.4" stroke="#3a2806" stroke-width="1.2"/></g>
<g transform="translate(613.6,429.9) rotate(-16)"><rect x="-6.4" y="-3.4" width="12.8" height="7.4" rx="3.4" fill="#3c3c3c" stroke="#241804" stroke-width="0.8"/><rect x="-4.2" y="-0.4" width="8.4" height="2.6" rx="1.3" fill="#9a9a9a"/><path d="M-5.4,-2.4 L5.4,-2.4" stroke="#3a2806" stroke-width="1.2"/></g>
<g transform="translate(627.2,429.3) rotate(-16)"><rect x="-5.6" y="-3.4" width="11.2" height="7.4" rx="3.4" fill="#3c3c3c" stroke="#241804" stroke-width="0.8"/><rect x="-3.3999999999999995" y="-0.4" width="6.799999999999999" height="2.6" rx="1.3" fill="#9a9a9a"/><path d="M-4.6,-2.4 L4.6,-2.4" stroke="#3a2806" stroke-width="1.2"/></g>
<g transform="translate(640.7,428.7) rotate(-16)"><rect x="-5.6" y="-3.4" width="11.2" height="7.4" rx="3.4" fill="#3c3c3c" stroke="#241804" stroke-width="0.8"/><rect x="-3.3999999999999995" y="-0.4" width="6.799999999999999" height="2.6" rx="1.3" fill="#9a9a9a"/><path d="M-4.6,-2.4 L4.6,-2.4" stroke="#3a2806" stroke-width="1.2"/></g>
<g transform="translate(654.3,428.0) rotate(-16)"><rect x="-5.6" y="-3.4" width="11.2" height="7.4" rx="3.4" fill="#3c3c3c" stroke="#241804" stroke-width="0.8"/><rect x="-3.3999999999999995" y="-0.4" width="6.799999999999999" height="2.6" rx="1.3" fill="#9a9a9a"/><path d="M-4.6,-2.4 L4.6,-2.4" stroke="#3a2806" stroke-width="1.2"/></g>
<g transform="translate(667.9,427.4) rotate(-16)"><rect x="-5.6" y="-3.4" width="11.2" height="7.4" rx="3.4" fill="#3c3c3c" stroke="#241804" stroke-width="0.8"/><rect x="-3.3999999999999995" y="-0.4" width="6.799999999999999" height="2.6" rx="1.3" fill="#9a9a9a"/><path d="M-4.6,-2.4 L4.6,-2.4" stroke="#3a2806" stroke-width="1.2"/></g>
<polygon points="534.7,389.4 567.8,386.0 570.3,392.8 541.5,395.4" fill="#a5a0a0" stroke="#1d1a1a" stroke-width="0.7" stroke-linejoin="round"/>
<polygon points="534.7,389.4 567.8,386.0 568.6,388.4 537.0,391.6" fill="#bcb7b7"/>
<polygon points="570.3,390.3 596.6,388.6 593.2,393.7 572.9,394.5" fill="#3d3434" stroke="#1d1a1a" stroke-width="0.5" stroke-linejoin="round"/>
<polygon points="611.9,383.5 644.1,380.9 646.7,387.7 616.1,389.4" fill="#a5a0a0" stroke="#1d1a1a" stroke-width="0.7" stroke-linejoin="round"/>
<polygon points="611.9,383.5 644.1,380.9 644.9,383.3 614.0,385.8" fill="#bcb7b7"/>
<polygon points="647.5,384.3 667.9,383.5 670.4,388.6 649.2,389.4" fill="#3d3434" stroke="#1d1a1a" stroke-width="0.5" stroke-linejoin="round"/>
<polygon points="596.6,391.6 603.0,387.6 616.1,389.4 612.0,391.0" fill="#d6a81c"/>
<polygon points="573.7,475.1 584.7,463.2 630.5,456.4 639.0,456.4 623.8,470.0" fill="#aaa5a5" stroke="#1d1a1a" stroke-width="0.7" stroke-linejoin="round"/>
<polygon points="584.7,463.2 592.0,458.8 634.0,455.2 630.5,456.4" fill="#6f6a6a" stroke="#1d1a1a" stroke-width="0.6" stroke-linejoin="round"/>
<polygon points="623.8,470.0 630.5,456.4 634.0,455.2 639.0,456.4" fill="#7d7878" stroke="#1d1a1a" stroke-width="0.6" stroke-linejoin="round"/>
<polygon points="573.7,475.1 578.0,471.4 622.0,467.0 623.8,470.0" fill="#c9c5c5"/>
<path d="M516,394.6 L665,385.7 Q670,385.4 670.6,390.4 L678.4,458.6 Q679,463.6 674,464 L527,475.6 Q521.8,476 521.2,471 L511.6,400 Q511,395 516,394.6 Z" fill="none" stroke="#1d1a1a" stroke-width="0.9" stroke-linejoin="round" stroke-linecap="round"/>
</g>
<polygon points="548.7,621.3 679.8,612.9 683.8,617.2 557.4,628.6" fill="url(#gLip)" stroke="#1d1a1a" stroke-width="0.7" stroke-linejoin="round"/>
<polygon points="683.8,617.2 679.8,612.9 707.6,610.8 708.0,613.6" fill="#8a8484" stroke="#1d1a1a" stroke-width="0.6" stroke-linejoin="round"/>
<path d="M497.6,146 Q498,143 502.3,141 L516,142.6 Q514.6,146 512.8,148 Z" fill="#16a850" stroke="#05401c" stroke-width="0.7" stroke-linejoin="round" stroke-linecap="round"/>
<path d="M500.4,144.6 L513.6,144.4" fill="none" stroke="#34e07c" stroke-width="1.6" stroke-linejoin="round" stroke-linecap="round"/>
<path d="M478.2,154 Q477.8,152 479.6,151.4 L512.5,147.5 Q514,150.6 511.6,153.9 L480.4,155.8 Q478.4,155.8 478.2,154 Z" fill="#17ad52" stroke="#05401c" stroke-width="0.8" stroke-linejoin="round" stroke-linecap="round"/>
<path d="M480.4,152.8 L511.6,149.8" fill="none" stroke="#3ae684" stroke-width="1.7" stroke-linejoin="round" stroke-linecap="round"/>
<path d="M480.4,155 L511.4,153" fill="none" stroke="#0a6e33" stroke-width="1" stroke-linejoin="round" stroke-linecap="round"/>
<path d="M635.2,131 L680,127.4 L685.2,126.4 Q690.8,128.6 692.8,137 L694.6,149 L690,141.4 L686,135.4 L680,133.2 L635.2,134.9 Q633.6,133 635.2,131 Z" fill="#15a64e" stroke="#05401c" stroke-width="0.8" stroke-linejoin="round" stroke-linecap="round"/>
<path d="M636.4,132.6 L680.6,129.8" fill="none" stroke="#3ae684" stroke-width="1.8" stroke-linejoin="round" stroke-linecap="round"/>
<path d="M613.6,142 Q613.2,138.6 616.6,137.6 L658.4,137 Q660.2,140 657.4,142.7 L617,146.2 Q614,146 613.6,142 Z" fill="#17ad52" stroke="#05401c" stroke-width="0.8" stroke-linejoin="round" stroke-linecap="round"/>
<path d="M616.4,140.4 L657.4,139" fill="none" stroke="#3ae684" stroke-width="2" stroke-linejoin="round" stroke-linecap="round"/>
<path d="M616.8,144.8 L656.8,141.8" fill="none" stroke="#0a6e33" stroke-width="1.1" stroke-linejoin="round" stroke-linecap="round"/>
<path d="M658.4,137 L680,133.4 L686,135.6 L688,139 L660,141.6 Z" fill="#0e8a40" stroke="#05401c" stroke-width="0.6" stroke-linejoin="round" stroke-linecap="round"/>
<path d="M685.2,127.4 Q691.2,131 693.6,146" fill="none" stroke="#2fdc76" stroke-width="2" stroke-linejoin="round" stroke-linecap="round"/>
<path d="M682.6,134.4 L689.4,139 L688.2,134.6 Z" fill="#d8d8d8" stroke="#333" stroke-width="0.4" stroke-linejoin="round" stroke-linecap="round"/>
<path d="M617.5,625.3 L636.6,624.2 L628.9,656.9 L640.6,672.2 Q640,676 636,677.6 L632.7,678.4 Q629,678.6 627.3,676.6 L612,660.5 Q609,656 609.8,650.4 Z" fill="#0a6a30" stroke="#043a18" stroke-width="0.9" stroke-linejoin="round" stroke-linecap="round"/>
<polygon points="614.5,654.0 629.6,652.5 628.9,656.9 631.0,660.0 617.0,662.5 613.6,658.0" fill="#0f8a40" stroke="#043a18" stroke-width="0.5" stroke-linejoin="round"/>
<polygon points="617.0,662.5 631.0,660.0 640.6,672.2 638.0,676.5 632.0,678.0 628.0,676.8" fill="#12a04c" stroke="#043a18" stroke-width="0.5" stroke-linejoin="round"/>
<path d="M619.3,626 L611.9,650.6 Q611.2,656 614,660 L629,675.8" fill="none" stroke="#22d06e" stroke-width="2.8" stroke-linejoin="round" stroke-linecap="round"/>
<path d="M668.7,621.5 L687.5,620.8 L682.9,647.1 L694.1,661.3 Q694,665 690,666.6 L687.3,667.6 Q683,668.4 680.7,666.7 L666.5,654 Q662.8,649 663.3,642.7 Z" fill="#0a6a30" stroke="#043a18" stroke-width="0.9" stroke-linejoin="round" stroke-linecap="round"/>
<polygon points="668.0,645.5 683.3,643.5 682.9,647.1 685.0,650.0 671.0,653.0 667.0,649.5" fill="#0f8a40" stroke="#043a18" stroke-width="0.5" stroke-linejoin="round"/>
<polygon points="671.0,653.0 685.0,650.0 694.1,661.3 692.0,665.5 687.0,667.4 682.0,666.2" fill="#12a04c" stroke="#043a18" stroke-width="0.5" stroke-linejoin="round"/>
<path d="M670.5,622.4 L665.4,642.9 Q664.9,648.5 668,652.4 L682.4,665.8" fill="none" stroke="#22d06e" stroke-width="2.8" stroke-linejoin="round" stroke-linecap="round"/>
<path d="M796.4,587.7 L795,595.9 Q789,599.5 789.5,604 Q790,609.5 791.6,613.7 L807.3,638.2 Q808.5,642.5 805.9,646.4 L798.4,658.7 Q799,662.5 801.8,664.1 Q805,665.5 808.6,664.1 L823.7,647.8 Q825.5,643 824.3,638.2 L814.1,610.9 L812.7,600 L814.1,589.1 Z" fill="#0a6c31" stroke="#043a18" stroke-width="0.9" stroke-linejoin="round" stroke-linecap="round"/>
<path d="M807.3,638.2 L824.3,638.2 M795,596.5 L813,594.5 M791,603.5 L813.2,601.5 M791.8,609 L814,607" fill="none" stroke="#043a18" stroke-width="0.6" stroke-linejoin="round" stroke-linecap="round"/>
<path d="M797.6,588.6 L796.6,596.2 Q790.9,600 791.4,604 Q791.9,609 793.5,613 L809.1,637.8 Q810.3,642.5 807.9,646.6 L800.2,659 " fill="none" stroke="#22d06e" stroke-width="2.6" stroke-linejoin="round" stroke-linecap="round"/>
<path d="M850.3,578.9 L849,587 Q843,590 843.4,594.5 Q843.8,600.5 846.2,605.5 L861.9,628.7 Q863,633 860.5,636.8 L852.3,649.8 Q853,653.5 856.4,655.3 Q860,656.5 864.6,654.6 L878.2,634.1 Q879.5,630 878,625.9 L867.3,599.3 L865.9,589.1 L874.1,578.2 Z" fill="#0a6c31" stroke="#043a18" stroke-width="0.9" stroke-linejoin="round" stroke-linecap="round"/>
<path d="M861.9,628.7 L878,626.5 M849,587.6 L866,585.5 M844,594 L866.4,591.8 M845,600.5 L867.4,598.6" fill="none" stroke="#043a18" stroke-width="0.6" stroke-linejoin="round" stroke-linecap="round"/>
<path d="M851.5,579.8 L850.6,587.2 Q844.9,590.4 845.3,594.5 Q845.7,600 848,605 L863.7,628.3 Q864.8,633 862.4,637 L854.2,650" fill="none" stroke="#22d06e" stroke-width="2.6" stroke-linejoin="round" stroke-linecap="round"/>
<ellipse cx="797" cy="586.5" rx="2.2" ry="2.6" fill="#14a04c" stroke="#043a18" stroke-width="0.6"/>
<ellipse cx="821" cy="582.6" rx="2.2" ry="2.6" fill="#14a04c" stroke="#043a18" stroke-width="0.6"/>
<ellipse cx="851" cy="577.6" rx="2.2" ry="2.6" fill="#14a04c" stroke="#043a18" stroke-width="0.6"/>
<ellipse cx="875" cy="573.4" rx="2.2" ry="2.6" fill="#14a04c" stroke="#043a18" stroke-width="0.6"/>
<g>
<path d="M285.6,687.5 L284,666 L287,666 L289.2,687.5 Z" fill="#2f9a3a" stroke="#1d6d26" stroke-width="0.6" stroke-linejoin="round" stroke-linecap="round"/>
<path d="M284.8,658 L289.6,667.8 L281.6,667.8 Z" fill="#2a8a33" stroke="#1d6d26" stroke-width="0.5" stroke-linejoin="round" stroke-linecap="round"/>
<path d="M288,686.2 L304,684.8 L304,688.6 L288,689.6 Z" fill="#c8302c" stroke="#8d1a18" stroke-width="0.5" stroke-linejoin="round" stroke-linecap="round"/>
<path d="M312,686.6 L302.6,682 L302.6,691.4 Z" fill="#d83a34" stroke="#8d1a18" stroke-width="0.5" stroke-linejoin="round" stroke-linecap="round"/>
<path d="M287.5,686 L275,687.6 L275,691.4 L288,689.8 Z" fill="#1a1a9c" stroke="#10106a" stroke-width="0.5" stroke-linejoin="round" stroke-linecap="round"/>
<path d="M271,689.6 L276.4,685.4 L281.6,689.2 L276.2,694 Z" fill="#1f22c4" stroke="#10106a" stroke-width="0.5" stroke-linejoin="round" stroke-linecap="round"/>
<text x="281.4" y="656" textLength="6" lengthAdjust="spacingAndGlyphs" style="font-family:'Liberation Serif',serif;font-size:9.5px;font-weight:bold;fill:#1d7a2a">Y</text>
<text x="311.6" y="689.8" textLength="5" lengthAdjust="spacingAndGlyphs" style="font-family:'Liberation Serif',serif;font-size:9.5px;font-weight:bold;fill:#c62020">X</text>
<text x="265" y="694.6" textLength="5.6" lengthAdjust="spacingAndGlyphs" style="font-family:'Liberation Serif',serif;font-size:9.5px;font-weight:bold;fill:#1c1cb4">Z</text>
</g>
<rect x="0" y="0" width="247" height="733" fill="#f8f8f8"/>
<rect x="39" y="0" width="204.6" height="1.3" fill="#8c8c8c"/><rect x="0" y="0" width="39" height="1.3" fill="#e9e9e9"/>
<rect x="3.5" y="1.8" width="239" height="24.6" fill="#f6f6f6" stroke="#c3c3c3" stroke-width="1"/>
<g><path d="M6.6,8.6 L22,8.6 L15.6,16.6 L15.6,23.6 L13,22 L13,16.6 Z" fill="#f4f4f4" stroke="#4a5a66" stroke-width="1.1" stroke-linejoin="round"/><rect x="6.2" y="6.2" width="16.2" height="3.2" rx="1.6" fill="url(#funnelg)" stroke="#1f6f92" stroke-width="0.8"/><path d="M24.2,17 L29.4,17 L26.8,20 Z" fill="#444"/></g>
<rect x="231" y="27" width="13.4" height="702" fill="#f1f1f1"/>
<rect x="231.7" y="45.6" width="12" height="586" fill="url(#thumbg)" stroke="#b4b4b4" stroke-width="0.8"/>
<path d="M235.2,335.6h7 M235.2,338.6h7 M235.2,341.6h7" stroke="#6f6f6f" stroke-width="1.1"/>
<path d="M235.8,38 L239.2,34.3 L242.6,38 Z" fill="#444"/>
<path d="M235.6,719.2 L241.6,719.2 L238.6,722.4 Z" fill="#444"/>
<rect x="0" y="729" width="231.5" height="4" fill="#e6e6e6"/><rect x="0" y="728.5" width="244" height="1" fill="#bdbdbd"/>
<rect x="17.8" y="729.8" width="84.6" height="6" fill="#fbfbfb" stroke="#a8a8a8" stroke-width="0.9"/>
<rect x="244.2" y="0" width="1.6" height="733" fill="#e6e6e6"/>
<rect x="245.7" y="0" width="1.1" height="733" fill="#8f8f8f"/>
<path d="M246.2,330.2 L254.4,330.2 L254.4,368 L246.2,368" fill="#f5f5f5" stroke="#8a8a8a" stroke-width="1"/><rect x="245.2" y="330.8" width="1.6" height="36.6" fill="#f5f5f5"/><circle cx="250.1" cy="349" r="2.7" fill="#d9d9d9" stroke="#8e8e8e" stroke-width="0.8"/>
<g clip-path="url(#treeclip)">
<use href="#i-asm" x="3" y="38"/>
<text x="25.6" y="42.9" textLength="104.7" lengthAdjust="spacingAndGlyphs">UB11123-HFD1-4F</text>
<text x="140.2" y="42.9" textLength="88.4" lengthAdjust="spacingAndGlyphs">(Default&lt;Defaul</text>
<use href="#i-hist" x="25" y="60"/>
<text x="48.8" y="64.9" textLength="40.0" lengthAdjust="spacingAndGlyphs">History</text>
<use href="#i-sens" x="25" y="82"/>
<text x="48.8" y="86.9" textLength="44.7" lengthAdjust="spacingAndGlyphs">Sensors</text>
<use href="#i-arr-r" x="8" y="104"/>
<use href="#i-anno" x="25" y="104"/>
<text x="48.8" y="108.9" textLength="67.6" lengthAdjust="spacingAndGlyphs">Annotations</text>
<use href="#i-plane" x="28" y="126"/>
<text x="48.8" y="130.9" textLength="29.0" lengthAdjust="spacingAndGlyphs">Front</text>
<use href="#i-plane" x="28" y="148"/>
<text x="48.8" y="152.9" textLength="21.4" lengthAdjust="spacingAndGlyphs">Top</text>
<use href="#i-plane" x="28" y="170"/>
<text x="48.8" y="174.9" textLength="29.0" lengthAdjust="spacingAndGlyphs">Right</text>
<use href="#i-origin" x="25" y="192"/>
<text x="48.8" y="196.9" textLength="34.8" lengthAdjust="spacingAndGlyphs">Origin</text>
<use href="#i-arr-r" x="8" y="214"/>
<use href="#i-comp" x="24.7" y="214"/>
<text x="48.8" y="218.9" textLength="12.0" lengthAdjust="spacingAndGlyphs">(-)</text>
<text x="65.5" y="218.9" textLength="168.0" lengthAdjust="spacingAndGlyphs">002-0004-004-HOUSING-TYP</text>
<use href="#i-arr-r" x="8" y="236"/>
<use href="#i-comp" x="24.7" y="236"/>
<text x="48.8" y="240.9" textLength="12.0" lengthAdjust="spacingAndGlyphs">(-)</text>
<text x="65.5" y="240.9" textLength="162.1" lengthAdjust="spacingAndGlyphs">050-3F03-562-USB-S-CONTA</text>
<use href="#i-arr-r" x="8" y="258"/>
<use href="#i-comp" x="24.7" y="258"/>
<text x="48.8" y="262.9" textLength="12.0" lengthAdjust="spacingAndGlyphs">(-)</text>
<text x="65.5" y="262.9" textLength="162.1" lengthAdjust="spacingAndGlyphs">050-3F03-562-USB-S-CONTA</text>
<use href="#i-arr-r" x="8" y="280"/>
<use href="#i-comp" x="24.7" y="280"/>
<text x="48.8" y="284.9" textLength="12.0" lengthAdjust="spacingAndGlyphs">(-)</text>
<text x="65.5" y="284.9" textLength="162.1" lengthAdjust="spacingAndGlyphs">050-3F03-562-USB-S-CONTA</text>
<use href="#i-arr-r" x="8" y="302"/>
<use href="#i-comp" x="24.7" y="302"/>
<text x="48.8" y="306.9" textLength="12.0" lengthAdjust="spacingAndGlyphs">(-)</text>
<text x="65.5" y="306.9" textLength="162.1" lengthAdjust="spacingAndGlyphs">050-3F03-562-USB-S-CONTA</text>
<use href="#i-arr-r" x="8" y="324"/>
<use href="#i-comp" x="24.7" y="324"/>
<text x="48.8" y="328.9" textLength="12.0" lengthAdjust="spacingAndGlyphs">(-)</text>
<text x="65.5" y="328.9" textLength="162.1" lengthAdjust="spacingAndGlyphs">050-4F03-562-USB-L-CONTA</text>
<use href="#i-arr-r" x="8" y="346"/>
<use href="#i-comp" x="24.7" y="346"/>
<text x="48.8" y="350.9" textLength="12.0" lengthAdjust="spacingAndGlyphs">(-)</text>
<text x="65.5" y="350.9" textLength="162.1" lengthAdjust="spacingAndGlyphs">050-4F03-562-USB-L-CONTA</text>
<use href="#i-arr-r" x="8" y="368"/>
<use href="#i-comp" x="24.7" y="368"/>
<text x="48.8" y="372.9" textLength="12.0" lengthAdjust="spacingAndGlyphs">(-)</text>
<text x="65.5" y="372.9" textLength="162.1" lengthAdjust="spacingAndGlyphs">050-4F03-562-USB-L-CONTA</text>
<use href="#i-arr-r" x="8" y="390"/>
<use href="#i-comp" x="24.7" y="390"/>
<text x="48.8" y="394.9" textLength="12.0" lengthAdjust="spacingAndGlyphs">(-)</text>
<text x="65.5" y="394.9" textLength="162.1" lengthAdjust="spacingAndGlyphs">050-4F03-562-USB-L-CONTA</text>
<use href="#i-arr-d" x="5.9" y="412"/>
<use href="#i-comp" x="24.7" y="412"/>
<text x="48.8" y="416.9" textLength="12.0" lengthAdjust="spacingAndGlyphs">(-)</text>
<text x="65.5" y="416.9" textLength="78.7" lengthAdjust="spacingAndGlyphs">FRONT-SHELL</text>
<text x="147.3" y="416.9" textLength="21.9" lengthAdjust="spacingAndGlyphs">&lt;1&gt;</text>
<text x="175.5" y="416.9" textLength="47.9" lengthAdjust="spacingAndGlyphs">(Default)</text>
<use href="#i-arr-r" x="31.4" y="434"/>
<use href="#i-partf" x="48.3" y="434"/>
<text x="71.9" y="438.9" textLength="78.7" lengthAdjust="spacingAndGlyphs">FRONT-SHELL</text>
<text x="153.7" y="438.9" textLength="21.9" lengthAdjust="spacingAndGlyphs">&lt;1&gt;</text>
<text x="181.9" y="438.9" textLength="47.3" lengthAdjust="spacingAndGlyphs">(Default)</text>
<use href="#i-arr-r" x="31.4" y="456"/>
<use href="#i-part" x="48.3" y="456"/>
<text x="71.9" y="460.9" textLength="12.0" lengthAdjust="spacingAndGlyphs">(-)</text>
<text x="88.8" y="460.9" textLength="91.8" lengthAdjust="spacingAndGlyphs">FRONT-SHELL-1</text>
<text x="183.4" y="460.9" textLength="21.9" lengthAdjust="spacingAndGlyphs">&lt;1&gt;</text>
<text x="211.5" y="460.9" textLength="17.3" lengthAdjust="spacingAndGlyphs">(De</text>
<use href="#i-plane" x="51.2" y="478"/>
<text x="71.9" y="482.9" textLength="28.9" lengthAdjust="spacingAndGlyphs">Front</text>
<use href="#i-plane" x="51.2" y="500"/>
<text x="71.9" y="504.9" textLength="21.4" lengthAdjust="spacingAndGlyphs">Top</text>
<use href="#i-plane" x="51.2" y="522"/>
<text x="71.9" y="526.9" textLength="28.9" lengthAdjust="spacingAndGlyphs">Right</text>
<use href="#i-arr-r" x="8" y="544"/>
<use href="#i-comp" x="24.7" y="544"/>
<text x="48.8" y="548.9" textLength="12.0" lengthAdjust="spacingAndGlyphs">(-)</text>
<text x="65.5" y="548.9" textLength="157.9" lengthAdjust="spacingAndGlyphs">MINIDIN-CONTACT-L-0517</text>
<text x="225.4" y="548.9" textLength="7.1" lengthAdjust="spacingAndGlyphs">&lt;</text>
<use href="#i-arr-r" x="8" y="566"/>
<use href="#i-comp" x="24.7" y="566"/>
<text x="48.8" y="570.9" textLength="12.0" lengthAdjust="spacingAndGlyphs">(-)</text>
<text x="65.5" y="570.9" textLength="163.5" lengthAdjust="spacingAndGlyphs">MINIDIN-CONTACT-M-0517</text>
<use href="#i-arr-r" x="8" y="588"/>
<use href="#i-comp" x="24.7" y="588"/>
<text x="48.8" y="592.9" textLength="12.0" lengthAdjust="spacingAndGlyphs">(-)</text>
<text x="65.5" y="592.9" textLength="157.9" lengthAdjust="spacingAndGlyphs">MINIDIN-CONTACT-S-0517</text>
<text x="225.4" y="592.9" textLength="7.1" lengthAdjust="spacingAndGlyphs">&lt;</text>
<use href="#i-arr-d" x="5.9" y="610"/>
<use href="#i-comp" x="24.7" y="610"/>
<text x="48.8" y="614.9" textLength="12.0" lengthAdjust="spacingAndGlyphs">(-)</text>
<text x="65.5" y="614.9" textLength="102.5" lengthAdjust="spacingAndGlyphs">SHELL-REAR-0517</text>
<text x="170.8" y="614.9" textLength="21.4" lengthAdjust="spacingAndGlyphs">&lt;1&gt;</text>
<text x="198.6" y="614.9" textLength="30.2" lengthAdjust="spacingAndGlyphs">(Defa</text>
<use href="#i-arr-r" x="31.4" y="632"/>
<use href="#i-partf" x="48.3" y="632"/>
<text x="71.9" y="636.9" textLength="102.5" lengthAdjust="spacingAndGlyphs">SHELL-REAR-0517</text>
<text x="177.2" y="636.9" textLength="21.2" lengthAdjust="spacingAndGlyphs">&lt;1&gt;</text>
<text x="204.7" y="636.9" textLength="30.2" lengthAdjust="spacingAndGlyphs">(Defa</text>
<use href="#i-arr-r" x="31.4" y="654"/>
<use href="#i-part" x="48.3" y="654"/>
<text x="71.9" y="658.9" textLength="12.0" lengthAdjust="spacingAndGlyphs">(-)</text>
<text x="88.8" y="658.9" textLength="112.1" lengthAdjust="spacingAndGlyphs">SHELL-REAR-0517-1</text>
<text x="203.7" y="658.9" textLength="23.7" lengthAdjust="spacingAndGlyphs">&lt;1&gt;</text>
<use href="#i-plane" x="51.2" y="676"/>
<text x="71.9" y="680.9" textLength="28.9" lengthAdjust="spacingAndGlyphs">Front</text>
<use href="#i-plane" x="51.2" y="698"/>
<text x="71.9" y="702.9" textLength="21.4" lengthAdjust="spacingAndGlyphs">Top</text>
<use href="#i-plane" x="51.2" y="720"/>
<text x="71.9" y="724.9" textLength="28.9" lengthAdjust="spacingAndGlyphs">Right</text>
</g>
</svg>
</body></html>
